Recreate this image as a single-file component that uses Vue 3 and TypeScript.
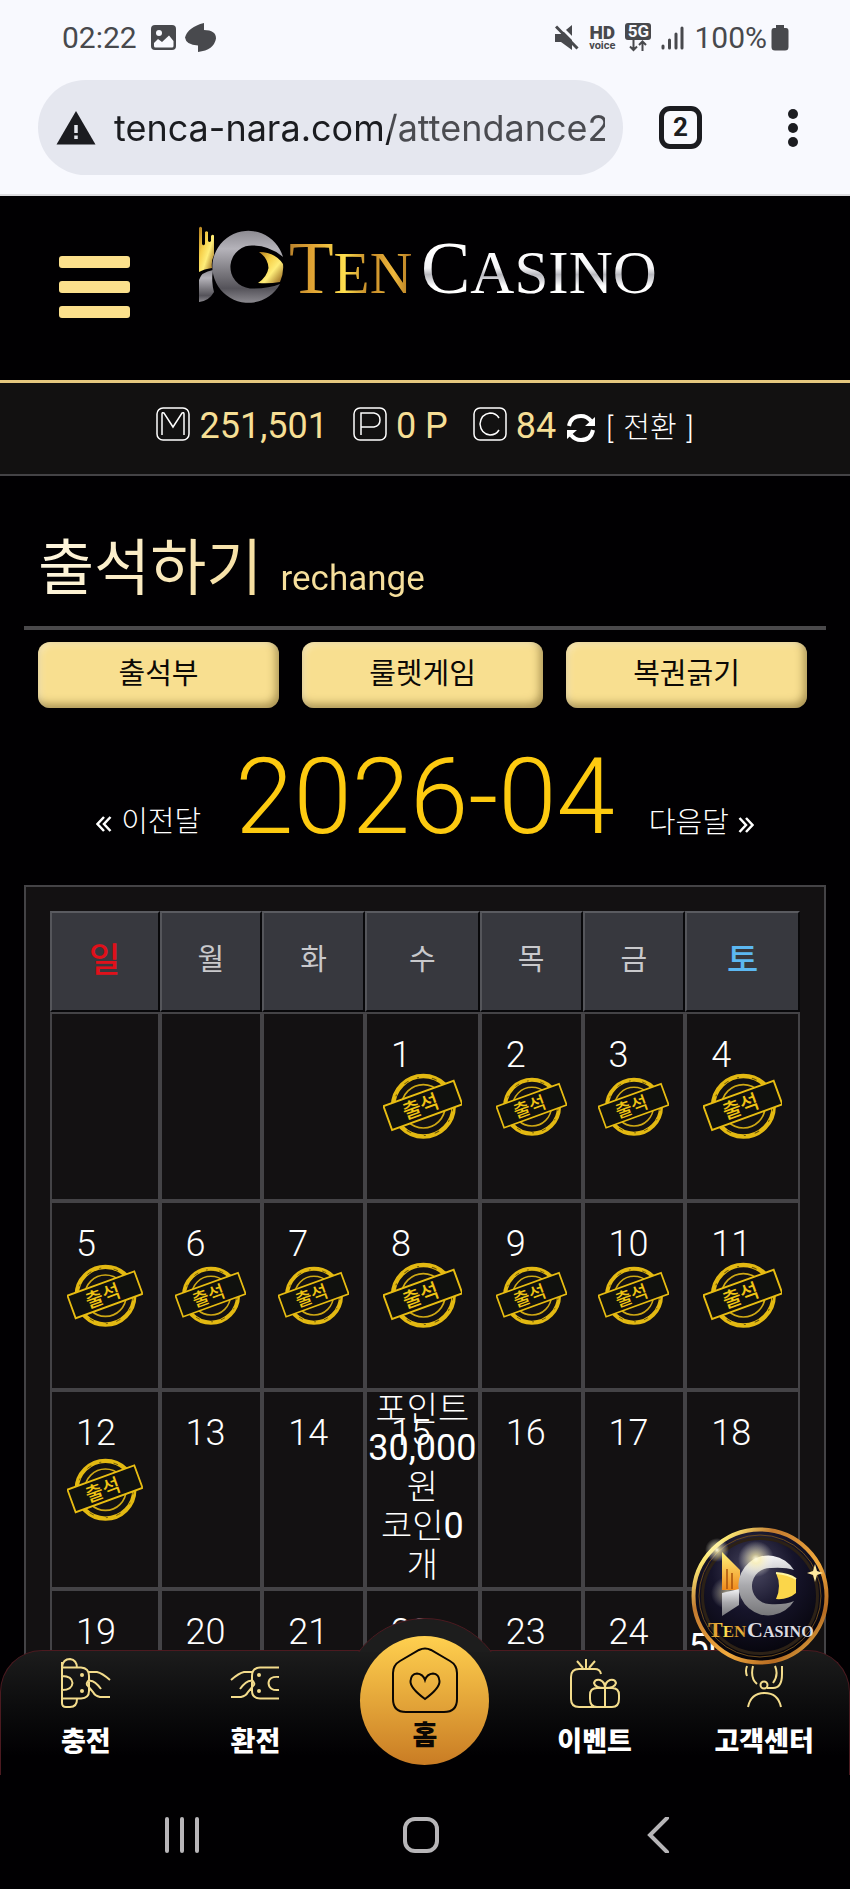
<script setup lang="ts">
import { ref } from 'vue'

interface Day {
  date: number | null
  stamped?: boolean
  point?: string
  coin?: string
}

const address = ref('tenca-nara.com/attendance2')
const weekdays = ['일', '월', '화', '수', '목', '금', '토']
const columns = [14.6, 13.7, 13.7, 15.3, 13.7, 13.7, 15.3]
const events = ['출석부', '룰렛게임', '복권긁기']

const rewards: Record<number, { point: string; coin: string }> = {
  15: { point: '30,000', coin: '0' },
  25: { point: '50,000', coin: '0' },
}

const firstWeekday = 3
const lastStamped = 12
const weeks: Day[][] = Array.from({ length: 4 }, (_, w) =>
  Array.from({ length: 7 }, (_, d) => {
    const date = w * 7 + d - firstWeekday + 1
    if (date < 1) return { date: null }
    return { date, stamped: date <= lastStamped, ...rewards[date] }
  }),
)
</script>

<template>
  <div class="phone">
    <svg class="defs" width="0" height="0" aria-hidden="true">
      <defs>
        <linearGradient id="gold" x1="0" y1="0" x2="1" y2="1">
          <stop offset="0" stop-color="#b07a1c" />
          <stop offset=".35" stop-color="#f6d04a" />
          <stop offset=".6" stop-color="#ffee7a" />
          <stop offset="1" stop-color="#8a5612" />
        </linearGradient>
        <linearGradient id="silver" x1="0" y1="0" x2="0" y2="1">
          <stop offset="0" stop-color="#8d8b92" />
          <stop offset=".25" stop-color="#b5b3ba" />
          <stop offset=".6" stop-color="#77757b" />
          <stop offset=".8" stop-color="#55535a" />
          <stop offset="1" stop-color="#8b898f" />
        </linearGradient>
        <linearGradient id="tenFill" x1="0" y1="0" x2="1" y2="0">
          <stop offset="0" stop-color="#b9822c" />
          <stop offset=".2" stop-color="#e2a534" />
          <stop offset=".45" stop-color="#ffdf4e" />
          <stop offset=".65" stop-color="#c18526" />
          <stop offset=".85" stop-color="#f0b93c" />
          <stop offset="1" stop-color="#a9701f" />
        </linearGradient>
        <linearGradient id="casinoFill" x1="0" y1="0" x2="0" y2="1">
          <stop offset=".3" stop-color="#ffffff" />
          <stop offset=".5" stop-color="#f4f4f6" />
          <stop offset=".58" stop-color="#b9b9bf" />
          <stop offset=".66" stop-color="#dcdce0" />
          <stop offset=".72" stop-color="#ffffff" />
        </linearGradient>
        <radialGradient id="badgeFill" cx=".45" cy=".3" r=".7">
          <stop offset="0" stop-color="#4a4862" />
          <stop offset=".45" stop-color="#16142a" />
          <stop offset="1" stop-color="#040308" />
        </radialGradient>
        <linearGradient id="badgeRim" x1="0" y1="0" x2="1" y2="1">
          <stop offset="0" stop-color="#c9802c" />
          <stop offset=".14" stop-color="#fff07a" />
          <stop offset=".3" stop-color="#c27a30" />
          <stop offset=".6" stop-color="#f2ab3e" />
          <stop offset=".8" stop-color="#b56a22" />
          <stop offset="1" stop-color="#ffd95a" />
        </linearGradient>
        <linearGradient id="badgeBars" x1="0" y1="0" x2="0" y2="1">
          <stop offset="0" stop-color="#fff27a" />
          <stop offset="1" stop-color="#f08a1c" />
        </linearGradient>
        <linearGradient id="badgeSilver" x1="0" y1="0" x2="0" y2="1">
          <stop offset="0" stop-color="#f4f4f6" />
          <stop offset=".5" stop-color="#a9a9ad" />
          <stop offset="1" stop-color="#77777a" />
        </linearGradient>
        <radialGradient id="flare">
          <stop offset="0" stop-color="#fffbe0" />
          <stop offset=".25" stop-color="#fff3b0" stop-opacity=".7" />
          <stop offset="1" stop-color="#fff" stop-opacity="0" />
        </radialGradient>
        <symbol id="mark" viewBox="0 0 86 78">
          <path fill="url(#gold)" d="M1 2Q2.500-.5 4 2V18Q5.500 20.500 7 18V6Q8.500 4.500 10 6V15Q11.500 17 13 15V10Q14.500 8 16 9.500V29Q13 35 14 42Q6 43 1 46Z" />
          <path fill="url(#silver)" d="M1 54Q3 46 15 44Q13 55 16 66Q11 75 1 76Z" />
          <path fill="url(#silver)" d="M85 31A36 36 0 1 0 82 58Q70 63 52 62.500A21.500 21.500 0 1 1 56 19.500Q72 20 85 31Z" />
          <path fill="url(#gold)" d="M61 26Q77 26 85 38Q86 47 82 56Q71 58 60 57Q69 51 70.500 42Q70 32 61 26Z" />
        </symbol>
        <symbol id="stamp" viewBox="0 0 79 66">
          <circle cx="40" cy="33" r="30" fill="none" stroke="#e3b912" stroke-width="4.500" />
          <circle cx="40" cy="33" r="29" fill="none" stroke="#6b560a" stroke-width="1" stroke-dasharray="5 9 2 13" />
          <circle cx="40" cy="33" r="21.500" fill="none" stroke="#cfa814" stroke-width="1.700" />
          <g transform="rotate(-20 39.500 32)">
            <rect x="2.500" y="19.500" width="74" height="25" fill="#10110e" stroke="#e8bd12" stroke-width="1.900" />
            <text x="37" y="39.500" text-anchor="middle" font-size="20" font-weight="500" fill="#f0c414">출석</text>
          </g>
        </symbol>
      </defs>
    </svg>

    <header class="browser">
      <div class="status">
        <div class="status-side">
          <time class="status-text">02:22</time>
          <svg class="ic-photo" width="26" height="26" viewBox="0 0 26 26" aria-hidden="true">
            <rect x="0" y="0" width="25" height="25" rx="4" fill="#48494d" />
            <circle cx="8" cy="8" r="3" fill="#f8f9fe" />
            <path d="M3 18L7 14L11 17L18 10.500L22.500 16V21Q22.500 22.500 21 22.500H4.500Q3 22.500 3 21Z" fill="#f8f9fe" />
          </svg>
          <svg width="32" height="30" viewBox="0 0 32 30" aria-hidden="true">
            <path d="M19 0V7Q31 7 31 15.500Q29 27 13 29V22.500Q1 22 0 14.500Q3 4 19 0Z" fill="#48494d" />
          </svg>
        </div>
        <div class="status-side right">
          <svg width="24" height="26" viewBox="0 0 24 26" aria-hidden="true">
            <path d="M0 9H6L17 0V25L6 17H0Z" fill="#48494d" />
            <path d="M3 -1L24 20" stroke="#f8f9fe" stroke-width="3" />
            <path d="M1 1.500L22.500 23.500" stroke="#48494d" stroke-width="3" />
          </svg>
          <div class="hd"><b>HD</b><span>voice</span></div>
          <div class="net">
            <b>5G</b>
            <svg width="18" height="12" viewBox="0 0 18 12" fill="none" stroke="#48494d" stroke-width="2" aria-hidden="true">
              <path d="M4.500 0V10M1 6.500L4.500 10L8 6.500M13.500 11V1.500M10 5L13.500 1.500L17 5" />
            </svg>
          </div>
          <svg width="23" height="24" viewBox="0 0 23 24" stroke="#48494d" stroke-width="3" stroke-linecap="round" aria-hidden="true">
            <path d="M2 20V22M8.500 14V22M15 8V22M21 2V22" />
          </svg>
          <span class="status-text battery">100%<svg width="18" height="26" viewBox="0 0 18 26" aria-hidden="true">
            <path d="M5 0H13V3H15Q17.500 3 17.500 6V22Q17.500 25.500 14 25.500H4Q.5 25.500 .5 22V6Q.5 3 3 3H5Z" fill="#48494d" />
          </svg></span>
        </div>
      </div>
      <div class="toolbar">
        <label class="omnibox">
          <svg width="40" height="34" viewBox="0 0 40 34" aria-hidden="true">
            <path d="M20 0L39.500 33.500H.5Z" fill="#1b1c20" />
            <path d="M20 14V22M20 24.500V28" stroke="#e5e7ee" stroke-width="3.500" />
          </svg>
          <input v-model="address" type="text" aria-label="URL" readonly />
        </label>
        <button class="tabs" type="button">2</button>
        <button class="more" type="button" aria-label="Menu">
          <svg width="12" height="42" viewBox="0 0 12 42" fill="#1b1c20"><circle cx="6" cy="7" r="5" /><circle cx="6" cy="21" r="5" /><circle cx="6" cy="35" r="5" /></svg>
        </button>
      </div>
    </header>

    <main class="page">
      <div class="site-head">
        <button class="burger" type="button" aria-label="메뉴"><i></i><i></i><i></i></button>
        <a class="logo" href="#" aria-label="Ten Casino">
          <svg width="460" height="80" viewBox="0 0 460 80">
            <use href="#mark" width="86" height="78" />
            <text x="91" y="67" fill="url(#tenFill)" class="logo-text"><tspan font-size="73">T</tspan><tspan font-size="59">EN</tspan></text>
            <text x="223" y="67" fill="url(#casinoFill)" class="logo-text"><tspan font-size="74">C</tspan><tspan font-size="61">ASINO</tspan></text>
          </svg>
        </a>
      </div>

      <div class="balance">
        <span class="wallet">
          <svg viewBox="0 0 34 34"><rect x="1" y="1" width="32" height="32" rx="6" /><path d="M6 28V7Q6 5 8 6L17 20L26 6Q28 5 28 7V28" /></svg>251,501</span>
        <span class="wallet">
          <svg viewBox="0 0 34 34"><rect x="1" y="1" width="32" height="32" rx="6" /><path d="M8 28V6H21Q27 7 27 13Q27 19 21 20H8" /></svg>0 P</span>
        <span class="wallet">
          <svg viewBox="0 0 34 34"><rect x="1" y="1" width="32" height="32" rx="6" /><path d="M26 11Q23 6 17 6Q8 7 7 17Q8 27 17 28Q23 28 26 23" /></svg>84</span>
        <button class="convert" type="button">
          <svg width="30" height="30" viewBox="0 0 30 30" aria-hidden="true">
            <g fill="none" stroke="#fff" stroke-width="4"><path d="M3 13Q5 3 15 3Q21 3 25 8" /><path d="M27 17Q25 27 15 27Q9 27 5 22" /></g>
            <path d="M29 4V13H19ZM1 26V17H11Z" fill="#fff" />
          </svg>
          <span>[</span><span>전환</span><span>]</span>
        </button>
      </div>

      <h1 class="title"><span class="title-ko">출석하기</span><span class="title-en">rechange</span></h1>

      <div class="events">
        <button v-for="e in events" :key="e" type="button">{{ e }}</button>
      </div>

      <nav class="month">
        <a href="#"><svg width="16" height="18" viewBox="0 0 16 18"><path d="M8 2L1.500 9L8 16M14.500 2L8 9L14.500 16" /></svg>이전달</a>
        <strong>2026-04</strong>
        <a href="#">다음달<svg width="16" height="18" viewBox="0 0 16 18"><path d="M1.500 2L8 9L1.500 16M8 2L14.500 9L8 16" /></svg></a>
      </nav>

      <section class="panel">
        <table>
          <colgroup>
            <col v-for="(c, i) in columns" :key="i" :style="{ width: c + '%' }" />
          </colgroup>
          <thead>
            <tr>
              <th v-for="(d, i) in weekdays" :key="d" scope="col" :class="{ sun: i === 0, sat: i === 6 }">{{ d }}</th>
            </tr>
          </thead>
          <tbody>
            <tr v-for="(week, w) in weeks" :key="w" :class="{ tall: w === 2 }">
              <td v-for="(day, d) in week" :key="d">
                <span v-if="day.date" class="date">{{ day.date }}</span>
                <svg v-if="day.stamped" class="stamp" viewBox="0 0 79 66"><use href="#stamp" /></svg>
                <div v-if="day.point" class="reward">
                  포인트<br /><b>{{ day.point }}</b><br />원<br />코인<b>{{ day.coin }}</b><br />개
                </div>
              </td>
            </tr>
          </tbody>
        </table>
      </section>

      <nav class="dock">
        <div class="bump"><i></i></div>
        <a href="#">
          <svg viewBox="0 0 50 50">
            <path d="M1 4V45Q1 49 5 49H9Q16 49 16 41M1 9Q2 1 9 1Q16 2 16 10M1 9.500H20Q28 10 28 18V33Q28 40 20 40.500H1M1 18Q11 18 11.500 25Q11 32 1 32M28 14H36Q41 15 49 22M28 22Q24 26 27 28L32 34Q34 38 39 39H49M27 23Q33 21 40 31" />
            <circle cx="21" cy="17" r="2" class="dot" /><circle cx="21" cy="33" r="2" class="dot" />
          </svg>
          <span>충전</span>
        </a>
        <a href="#">
          <svg viewBox="0 0 50 50">
            <path d="M49 9.500H30Q22 10 22 18V33Q22 40 30 40.500H49M49 19Q39 18 38.500 25Q39 33 49 32M22 14H14Q9 15 1 22M22 22Q26 26 23 28L18 34Q16 38 11 39H1M23 23Q17 21 10 31" />
            <circle cx="29" cy="17" r="2" class="dot" /><circle cx="29" cy="33" r="2" class="dot" />
          </svg>
          <span>환전</span>
        </a>
        <a href="#" class="home">
          <svg viewBox="0 0 66 66">
            <path d="M27 3Q33 0 39 3L58 14Q65 18 65 26V52Q65 65 52 65H14Q1 65 1 52V26Q1 18 8 14Z" />
            <path d="M33 52Q18 41 18.500 34Q19 27 25 26.500Q31 27 33 33Q35 27 41 26.500Q47 27 47.500 34Q48 41 33 52Z" />
          </svg>
          <span>홈</span>
        </a>
        <a href="#">
          <svg viewBox="0 0 50 50">
            <path d="M31 16Q30 11 25 11H9Q1 11 1 19V41Q1 49 9 49H42Q49 49 49 41V37Q49 30 42 30H27Q20 30 20 37V41Q20 49 27 49M16 10V1M13 10L7 3M19 10L25 3M35 30V49M35 30Q25 30 24 25Q25 21 30 22Q35 24 35 30Q35 24 40 22Q45 21 46 25Q45 30 35 30" />
          </svg>
          <span>이벤트</span>
        </a>
        <a href="#">
          <svg viewBox="0 0 50 50">
            <path d="M9 49Q12 35 25.500 35Q39 35 42 49M8 18Q6 13 8 8M18 26Q11 20 14 8M34 25Q40 17 36 8M43 8V16Q43 30 34 30H28" />
            <circle cx="25" cy="27" r="3.500" />
          </svg>
          <span>고객센터</span>
        </a>
        <a class="badge" href="#" aria-label="Ten Casino">
          <svg width="138" height="138" viewBox="0 0 138 138">
            <circle cx="69" cy="69" r="66.500" fill="url(#badgeFill)" stroke="url(#badgeRim)" stroke-width="4" />
            <circle cx="69" cy="69" r="61" fill="none" stroke="#6b4a1c" stroke-width="1" />
            <circle cx="69" cy="69" r="57.500" fill="none" stroke="#2c2116" stroke-width="3" />
            <circle cx="26" cy="23" r="12" fill="url(#flare)" />
            <circle cx="36" cy="66" r="16" fill="url(#flare)" opacity=".6" />
            <path d="M31 25L49 43V63H31Z" fill="url(#badgeBars)" />
            <path d="M36 42V62M41 46V62" stroke="#a8520c" stroke-width="1.500" />
            <path d="M31 66L48 62V78L31 89Z" fill="url(#badgeSilver)" />
            <path d="M103 43A30 30 0 1 0 103 74Q94 78 78 77A18 18 0 1 1 80 41Q94 40 103 43Z" fill="url(#badgeSilver)" />
            <path d="M85 46Q98 47 105 52V66Q97 73 85 72Q91 59 85 46Z" fill="#fbd64a" />
            <path d="M85 46Q98 47 105 52" fill="none" stroke="#fff6a0" stroke-width="2" />
            <circle cx="65" cy="32" r="18" fill="url(#flare)" />
            <path d="M124 37L126 44L132 46L126 48L124 55L122 48L116 46L122 44Z" fill="#ffe9a0" />
            <text x="17" y="110" fill="url(#tenFill)" class="logo-text"><tspan font-size="22">T</tspan><tspan font-size="17">EN</tspan></text>
            <text x="56" y="110" fill="#dcdce2" class="logo-text"><tspan font-size="22">C</tspan><tspan font-size="16">ASINO</tspan></text>
          </svg>
        </a>
      </nav>
    </main>

    <footer class="system">
      <button type="button" aria-label="최근 앱"><svg width="36" height="36" viewBox="0 0 36 36"><path d="M3 2V34M18 2V34M33 2V34" /></svg></button>
      <button type="button" aria-label="홈 화면"><svg width="36" height="36" viewBox="0 0 36 36"><rect x="2" y="2" width="32" height="32" rx="10" /></svg></button>
      <button type="button" aria-label="뒤로"><svg width="36" height="36" viewBox="0 0 36 36"><path d="M25 1L8 18L25 35" /></svg></button>
    </footer>
  </div>
</template>

<style>
body {
  margin: 0;
  background: #000;
}
</style>

<style scoped>
.phone {
  height: 100vh;
  display: flex;
  flex-direction: column;
  overflow: hidden;
  background: #010002;
  color: #fff;
  font-family: Roboto, 'Noto Sans CJK KR', sans-serif;
}
.phone * {
  box-sizing: border-box;
}
.defs {
  position: absolute;
}
button {
  margin: 0;
  padding: 0;
  border: 0;
  background: none;
  color: inherit;
  font: inherit;
}
a {
  color: inherit;
  text-decoration: none;
}
svg {
  display: block;
  flex: none;
}

.browser {
  flex: none;
  height: 196px;
  background: #f8f9fe;
  border-bottom: 2px solid #dddde0;
  color: #48494d;
}
.status {
  height: 80px;
  padding: 0 61px 5px 62px;
  display: flex;
  justify-content: space-between;
  align-items: center;
}
.status-side {
  display: flex;
  align-items: center;
  gap: 8px;
}
.status-side.right {
  gap: 10px;
}
.status-text {
  font-size: 30px;
  line-height: 36px;
}
.ic-photo {
  margin-left: 6px;
}
.battery {
  display: flex;
  align-items: center;
  gap: 4px;
}
.hd {
  display: flex;
  flex-direction: column;
  align-items: center;
  font-size: 11px;
  line-height: 9px;
  font-weight: 700;
}
.hd b {
  font-size: 19px;
  line-height: 16px;
}
.net {
  display: flex;
  flex-direction: column;
  align-items: center;
}
.net b {
  width: 26px;
  border-radius: 3px;
  background: #48494d;
  color: #f8f9fe;
  font-size: 17px;
  line-height: 17px;
  text-align: center;
}
.toolbar {
  display: flex;
  align-items: center;
  padding: 0 51px 0 38px;
}
.omnibox {
  flex: 1;
  min-width: 0;
  height: 95px;
  padding: 0 18px;
  border-radius: 48px;
  background: #e5e7ef;
  display: flex;
  align-items: center;
  gap: 18px;
}
.omnibox input {
  flex: 1;
  min-width: 0;
  padding: 0;
  border: 0;
  outline: 0;
  font-family: Inter, sans-serif;
  font-size: 36px;
  line-height: 48px;
  background: linear-gradient(90deg, #1b1c20 276px, #4a4b50 276px);
  background-clip: text;
  -webkit-text-fill-color: transparent;
}
.tabs {
  width: 43px;
  height: 43px;
  margin-left: 36px;
  border: 5px solid #1b1c20;
  border-radius: 11px;
  color: #1b1c20;
  font-size: 26px;
  line-height: 33px;
  font-weight: 700;
}
.more {
  margin-left: 85px;
}

.page {
  position: relative;
  flex: 1;
  min-height: 0;
  overflow: hidden;
}
.site-head {
  height: 187px;
  padding: 30px 59px 0;
  border-bottom: 3px solid #e5c87f;
  display: flex;
  gap: 68px;
}
.burger {
  align-self: flex-start;
  width: 71px;
  margin-top: 30px;
  display: flex;
  flex-direction: column;
  gap: 13px;
}
.burger i {
  height: 12px;
  border-radius: 3px;
  background: #fbe08c;
}
.logo-text {
  font-family: 'Liberation Serif', serif;
}

.balance {
  height: 93px;
  padding-bottom: 5px;
  border-bottom: 2px solid #444346;
  background: #121111;
  display: flex;
  justify-content: center;
  align-items: center;
}
.wallet {
  display: flex;
  align-items: center;
  gap: 9px;
  margin-right: 25px;
  color: #f6df95;
  font-size: 36px;
  line-height: 44px;
}
.wallet svg {
  width: 34px;
  height: 34px;
  margin-bottom: 4px;
  fill: none;
  stroke: #fff;
  stroke-width: 1.5;
}
.wallet:nth-child(3) {
  margin-right: 10px;
}
.convert {
  display: flex;
  align-items: center;
  gap: 10px;
  padding-top: 4px;
  font-size: 29px;
  line-height: 40px;
  font-weight: 300;
}

.title {
  height: 154px;
  margin: 0 24px;
  padding: 49px 14px 0;
  border-bottom: 4px solid #4a494b;
  display: flex;
  align-items: baseline;
  gap: 18px;
  font-weight: 400;
}
.title span {
  background: linear-gradient(110deg, #fff8e4, #f5dc9a);
  background-clip: text;
  color: transparent;
}
.title-ko {
  font-size: 61px;
  line-height: 88px;
}
.title .title-en {
  font-size: 35px;
  line-height: 44px;
  background: #f6df9c;
  background-clip: text;
}

.events {
  margin: 12px 43px 0 38px;
  display: grid;
  grid-template-columns: repeat(3, 1fr);
  gap: 23px;
}
.events button {
  height: 66px;
  padding-bottom: 2px;
  border-radius: 12px;
  background: #f8df90;
  box-shadow: inset -3px -4px 8px rgba(90, 70, 20, 0.5), inset 3px 3px 6px rgba(255, 255, 255, 0.35);
  color: #0c0905;
  font-size: 29px;
  line-height: 36px;
}

.month {
  height: 177px;
  padding-top: 30px;
  display: flex;
  justify-content: center;
  align-items: baseline;
  gap: 34px;
}
.month strong {
  color: #fdca10;
  font-size: 105px;
  line-height: 120px;
  font-weight: 300;
}
.month a {
  display: flex;
  align-items: center;
  gap: 9px;
  font-size: 29px;
  line-height: 40px;
  font-weight: 300;
}
.month svg {
  margin-top: 4px;
  fill: none;
  stroke: #fff;
  stroke-width: 2.5;
}

.panel {
  margin: 0 24px;
  padding: 24px;
  border: 2px solid #444346;
  background: #131112;
}
table {
  width: 100%;
  table-layout: fixed;
  border-collapse: separate;
  border-spacing: 0;
}
th {
  height: 101px;
  padding: 0 0 4px;
  border: 2px solid;
  border-color: #5a5b60 #08080a #08080a #55565b;
  background: #37383e;
  color: #c9c9cc;
  font-size: 29px;
  line-height: 40px;
  font-weight: 400;
}
th.sun {
  color: #e0101a;
  font-size: 34px;
  font-weight: 500;
}
th.sat {
  color: #5cb8f2;
  font-size: 34px;
  font-weight: 500;
}
td {
  position: relative;
  height: 189px;
  padding: 19px 0 0 24px;
  border: 2px solid #444346;
  vertical-align: top;
}
.tall td {
  height: 199px;
}
.date {
  display: block;
  font-size: 36px;
  line-height: 44px;
  font-weight: 300;
}
.stamp {
  position: absolute;
  inset: 0;
  margin: auto;
  width: 72%;
}
#stamp text {
  font-family: 'Noto Sans CJK KR', sans-serif;
}
.reward {
  position: absolute;
  inset: -2px 0 0;
  font-size: 34px;
  line-height: 39px;
  font-weight: 300;
  text-align: center;
  white-space: nowrap;
}
.reward b {
  font-size: 36px;
  font-weight: 400;
}

.dock {
  position: absolute;
  inset: auto 0 0;
  height: 125px;
  border: 1px solid #4c1a20;
  border-bottom: 0;
  border-radius: 42px 42px 0 0;
  background: linear-gradient(#1c1c1c, #0c0c0d 45%, #010002 85%);
  display: grid;
  grid-template-columns: repeat(5, 1fr);
}
.bump {
  position: absolute;
  left: 50%;
  top: -33px;
  width: 134px;
  height: 34px;
  margin-left: -67px;
  overflow: hidden;
}
.bump i {
  position: absolute;
  left: 50%;
  top: 0;
  width: 166px;
  height: 166px;
  margin-left: -83px;
  border: 1px solid #4c1a20;
  border-radius: 50%;
  background: #1d1d1d;
}
.dock > a {
  position: relative;
  display: flex;
  flex-direction: column;
  align-items: center;
  padding-top: 7px;
  gap: 14px;
  font-size: 27px;
  line-height: 40px;
  font-weight: 900;
}
.dock a > svg {
  width: 50px;
  height: 50px;
  fill: none;
  stroke: #f3dc8c;
  stroke-width: 2;
}
.dock .dot {
  fill: #f3dc8c;
  stroke: none;
}
.dock > .home {
  justify-self: center;
  width: 129px;
  height: 129px;
  margin-top: -15px;
  padding-top: 11px;
  gap: 3px;
  border-radius: 50%;
  background: linear-gradient(#ffd04f, #c97c24);
  color: #0b0703;
}
.dock .home > svg {
  width: 66px;
  height: 66px;
  stroke: #0b0703;
}
.dock > .badge {
  position: absolute;
  right: 20px;
  top: -124px;
  padding: 0;
}
.dock .badge > svg {
  width: 138px;
  height: 138px;
  stroke: none;
}

.system {
  flex: none;
  height: 114px;
  padding: 6px 70px 0 62px;
  display: grid;
  grid-template-columns: repeat(3, 1fr);
  place-items: center;
}
.system svg {
  fill: none;
  stroke: #b7b5b8;
  stroke-width: 4;
  stroke-linecap: round;
}
</style>
